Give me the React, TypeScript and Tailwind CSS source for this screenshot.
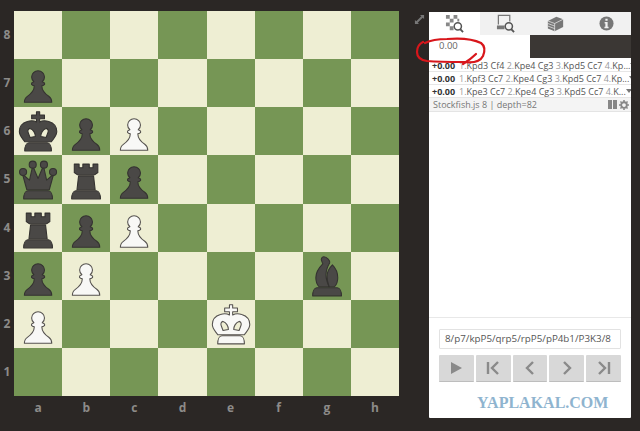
import type { ReactNode } from "react";

type PieceName = "p" | "r" | "q" | "k" | "b";

const shapes: Record<PieceName, ReactNode> = {
  p: (
    <path d="M22.5 11c-3.3 0-6 2.600-6 5.800 0 1.800.8 3.400 2.100 4.500-1.400.4-2.300 1.100-2.300 1.900 0 .9 1.100 1.600 2.700 1.900-.1 4.500-3 7.500-6.500 9.800-1.700 1.100-2.800 3.200-2.800 5.600h25.600c0-2.400-1.100-4.500-2.800-5.600-3.500-2.300-6.400-5.300-6.500-9.800 1.600-.3 2.700-1 2.700-1.900 0-.8-.9-1.500-2.300-1.900 1.300-1.100 2.100-2.700 2.100-4.500 0-3.200-2.700-5.800-6-5.800z" />
  ),
  r: (
    <>
      <path d="M9 41c0-4 1.500-7.500 4-7.500h19c2.500 0 4 3.500 4 7.500z" />
      <path d="M14 32.500l1.500-13h14l1.500 13z" />
      <path d="M11.500 8.500h4.500v3.500h3.500V8.500h6v3.500H29V8.500h4.500v8l-3 2h-16l-3-2z" />
    </>
  ),
  q: (
    <>
      <path d="M9 41c0-4 1.500-7.500 4-7.500h19c2.500 0 4 3.500 4 7.500z" />
      <path d="M12 32.500L8 18l6.500 5.500L17.500 10l5 12 5-12 3 13.500L37 18l-4 14.500z" />
      <circle cx="8.500" cy="16" r="3.300" />
      <circle cx="17.500" cy="9" r="3.300" />
      <circle cx="28" cy="9" r="3.300" />
      <circle cx="36.500" cy="16" r="3.300" />
    </>
  ),
  k: (
    <>
      <path d="M10 41c0-4 1.500-7.500 4-7.500h17c2.500 0 4 3.500 4 7.500z" />
      <path
        fillRule="evenodd"
        d="M21 4.500h3v3h4.500v3.500H24v3c2.500-1.500 5.500-1.500 8.500-.5 5 1.500 7.500 5.500 7.500 9.500 0 4-3 6.500-5 9.500H10c-2-3-5-5.500-5-9.500 0-4 2.500-8 7.500-9.500 3-1 6-1 8.500.5v-3h-4.500V7.500H21zM15 20c-2 .5-2.500 2.500-1.500 4.500l1.500 4c1.500-.5 3-.8 5-1 0-3-2-6.500-5-7.500zM30 20c-3 1-5 4.500-5 7.500 2 .2 3.500.5 5 1l1.500-4c1-2 .5-4-1.500-4.500z"
      />
    </>
  ),
  b: (
    <>
      <path d="M9 41c0-4 1.500-7.500 4-7.500h19c2.500 0 4 3.500 4 7.500z" />
      <path d="M19.500 4.500c-2 0-3 2-2 4l1 2.500c-3.500 3.500-6.500 8-6.500 13 0 3.500 1.200 6.500 3 8.500h9.500c-1.500-3-3-7-3-11 0-5 2-9 3.500-11.500.5-1.500-2.500-5.500-5.500-5.500z" />
      <path d="M27.500 12c3 3 5 7.500 5 12 0 3.500-1.200 6.500-3 8.500h-5c-1.300-3-2-6.500-2-10 0-4 2-7.500 5-10.500z" />
    </>
  ),
};

function Piece({ name, white }: { name: PieceName; white?: boolean }) {
  return (
    <svg viewBox="0 0 45 45" className="w-full h-full block">
      <g
        fill={white ? "#f8f8f6" : "#4a4846"}
        stroke={white ? "#55524f" : "#343230"}
        strokeWidth="1"
        strokeLinejoin="round"
      >
        {shapes[name]}
      </g>
    </svg>
  );
}

const position: Record<string, { name: PieceName; white?: boolean }> = {
  a7: { name: "p" },
  a6: { name: "k" },
  b6: { name: "p" },
  c6: { name: "p", white: true },
  a5: { name: "q" },
  b5: { name: "r" },
  c5: { name: "p" },
  a4: { name: "r" },
  b4: { name: "p" },
  c4: { name: "p", white: true },
  a3: { name: "p" },
  b3: { name: "p", white: true },
  g3: { name: "b" },
  a2: { name: "p", white: true },
  e2: { name: "k", white: true },
};

const files = ["a", "b", "c", "d", "e", "f", "g", "h"];
const ranks = [8, 7, 6, 5, 4, 3, 2, 1];

function Board() {
  return (
    <div className="grid grid-cols-8 grid-rows-8 w-[385px] h-[385px] shrink-0">
      {ranks.map((rank, r) =>
        files.map((file, f) => {
          const piece = position[file + rank];
          return (
            <div
              key={file + rank}
              className={(r + f) % 2 === 0 ? "bg-[#eeeed3]" : "bg-[#769655]"}
            >
              {piece && <Piece name={piece.name} white={piece.white} />}
            </div>
          );
        })
      )}
    </div>
  );
}

function PvLine({ moves }: { moves: [string, string, string, string, string] }) {
  return (
    <div className="flex items-center h-[13px] border-b border-[#e6e6e6] pl-[3px] pr-[2px] text-[9px] leading-none whitespace-nowrap text-[#555]">
      <span className="font-bold text-[#333] w-[27px] shrink-0">+0.00</span>
      <span className="flex-1">
        <span className="text-[#999]">1.</span>{moves[0]} {moves[1]} <span className="text-[#999]">2.</span>Kpe4 Cg3{" "}
        <span className="text-[#999]">3.</span>Kpd5 Cc7 <span className="text-[#999]">4.</span>{moves[4]}
      </span>
      <span className="w-0 h-0 border-x-[3px] border-x-transparent border-t-[4px] border-t-[#777]" />
    </div>
  );
}

function Tabs() {
  return (
    <div className="flex h-[23px] bg-[#f1f1f1]">
      <div className="w-[51px] bg-white flex items-center justify-center">
        <svg viewBox="0 0 20 20" className="w-[19px] h-[19px]">
          <path fill="#888" d="M1 1h4v4H1zM9 1h4v4H9zM5 5h4v4H5zM13 5h2v3h-2zM1 9h4v4H1zM5 13h4v4H5z" />
          <circle cx="13.500" cy="13" r="3.800" fill="white" stroke="#555" strokeWidth="1.600" />
          <path d="M16 16l3 3" stroke="#555" strokeWidth="2" />
        </svg>
      </div>
      <div className="w-[50px] flex items-center justify-center">
        <svg viewBox="0 0 20 20" className="w-[19px] h-[19px]">
          <path fill="none" stroke="#777" strokeWidth="1.300" d="M2.500 11V1.500h12V8" />
          <path fill="#777" d="M1 12h8v4H1z" />
          <circle cx="13.500" cy="13" r="3.800" fill="#f1f1f1" stroke="#555" strokeWidth="1.600" />
          <path d="M16 16l3 3" stroke="#555" strokeWidth="2" />
        </svg>
      </div>
      <div className="w-[51px] flex items-center justify-center">
        <svg viewBox="0 0 20 20" className="w-[17px] h-[17px]">
          <path fill="#777" d="M1 7l10-5 8 3v9l-10 5-8-3z" />
          <path stroke="#f1f1f1" strokeWidth="0.800" fill="none" d="M1 7l8 3 10-5M9 10v9M1 10l8 3M1 13l8 3" />
        </svg>
      </div>
      <div className="flex-1 flex items-center justify-center">
        <svg viewBox="0 0 16 16" className="w-[15px] h-[15px]">
          <circle cx="8" cy="8" r="7.500" fill="#777" />
          <path fill="#f1f1f1" d="M6.800 2.800h2.400V5H6.800zM6 6.500h3.200v5h1V13H5.800v-1.500h1V8H6z" />
        </svg>
      </div>
    </div>
  );
}

function NavButton({ children }: { children: ReactNode }) {
  return (
    <button className="flex-1 flex items-center justify-center bg-[#d8d8d8] border-b border-[#bdbdbd] rounded-[1px]">
      <svg viewBox="0 0 16 16" className="w-[16px] h-[16px]" fill="none" stroke="#8a8a8a" strokeWidth="2.400">
        {children}
      </svg>
    </button>
  );
}

function Panel() {
  return (
    <div className="relative flex flex-col w-[202px] h-[406px] bg-white rounded-[1px] overflow-hidden">
      <Tabs />
      <div className="flex h-[23px]">
        <div className="w-[101px] bg-white pl-[10px] pt-[4px] text-[9.500px] text-[#666]">0.00</div>
        <div className="flex-1 bg-[#3b3734]" />
      </div>
      <div className="mt-[1px]">
        <PvLine moves={["Kpd3", "Cf4", "", "", "Kp..."]} />
        <PvLine moves={["Kpf3", "Cc7", "", "", "Kp..."]} />
        <PvLine moves={["Kpe3", "Cc7", "", "", "K..."]} />
      </div>
      <div className="flex items-center justify-between h-[14px] bg-[#f4f4f4] border-b border-[#e4e4e4] pl-[4px] pr-[2px] text-[9px] text-[#777]">
        <span>Stockfish.js 8 | depth=82</span>
        <span className="flex items-center gap-[2px]">
          <span className="w-[4px] h-[9px] bg-[#888]" />
          <span className="w-[4px] h-[9px] bg-[#888] -ml-[1px]" />
          <svg viewBox="0 0 16 16" className="w-[10px] h-[10px]">
            <circle cx="8" cy="8" r="4.500" fill="none" stroke="#888" strokeWidth="3" />
            <path stroke="#888" strokeWidth="2.500" d="M8 0v3M8 13v3M0 8h3M13 8h3M2.300 2.300l2 2M11.700 11.700l2 2M2.300 13.700l2-2M11.700 4.300l2-2" />
          </svg>
        </span>
      </div>
      <div className="flex-1 border-b border-[#e8e8e8]" />
      <div className="flex flex-col gap-[6px] px-[10px] pt-[11px] h-[100px] shrink-0">
        <div className="h-[20px] border border-[#e2e2e2] rounded-[1px] flex items-center pl-[5px] text-[9.800px] text-[#555] whitespace-nowrap">
          8/p7/kpP5/qrp5/rpP5/pP4b1/P3K3/8
        </div>
        <div className="flex gap-[2px] h-[27px]">
          <NavButton>
            <path fill="#8a8a8a" stroke="none" d="M3 2l11 6-11 6z" />
          </NavButton>
          <NavButton>
            <path d="M3 2v12M13 2L7 8l6 6" />
          </NavButton>
          <NavButton>
            <path d="M11 2L5 8l6 6" />
          </NavButton>
          <NavButton>
            <path d="M5 2l6 6-6 6" />
          </NavButton>
          <NavButton>
            <path d="M3 2l6 6-6 6M13 2v12" />
          </NavButton>
        </div>
      </div>
      <div className="absolute left-[48px] top-[383px] text-[16px] leading-none font-bold text-[#8fb4cf] whitespace-nowrap font-['Liberation_Serif',serif]">
        YAPLAKAL.COM
      </div>
    </div>
  );
}

export default function App() {
  return (
    <div className="relative w-[640px] h-[431px] bg-[#2b2725] overflow-hidden font-['Open_Sans',sans-serif]">
      <div className="flex pt-[11px]">
        <div className="flex flex-col w-[14px] h-[385px] shrink-0 font-bold text-[12px] text-[#8d8b89]">
          {ranks.map((rank) => (
            <div key={rank} className="flex-1 flex items-center justify-center">
              {rank}
            </div>
          ))}
        </div>
        <div className="flex flex-col">
          <Board />
          <div className="flex w-[385px] mt-[3px] font-bold text-[12px] text-[#8d8b89]">
            {files.map((file) => (
              <div key={file} className="flex-1 text-center">
                {file}
              </div>
            ))}
          </div>
        </div>
        <div className="flex flex-col pl-[15px] pt-[3px]">
          <svg viewBox="0 0 12 12" className="w-[11px] h-[11px]" fill="#777">
            <path d="M1 11V6.500l1.500 1.500 5.500-5.500L6.500 1H11v4.500L9.500 4 4 9.500 5.500 11z" />
          </svg>
        </div>
        <div className="ml-[4px] mt-[1px]">
          <Panel />
        </div>
      </div>
      <svg viewBox="0 0 640 431" className="absolute inset-0 w-[640px] h-[431px] pointer-events-none" fill="none" stroke="#d8161b" strokeWidth="2.200" strokeLinecap="round">
        <path d="M423 42c-4 2-6 6-6 10 0 5 3 8 10 9 12 1 26 1 37 1 8 1 16 0 19-6 2-5 2-10-2-13-8-4-22-5-34-4-8 0-16 1-22 4" />
        <path d="M476 54c-4 4-8 7-13 10" />
      </svg>
    </div>
  );
}
